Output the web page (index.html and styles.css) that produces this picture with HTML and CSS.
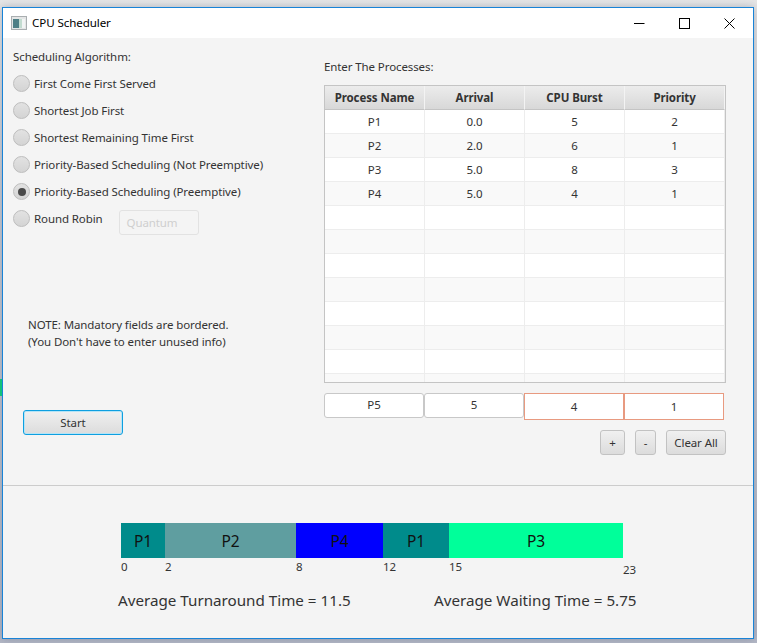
FILE: index.html
```html
<!DOCTYPE html>
<html>
<head>
  <meta charset="utf-8">
  <title>CPU Scheduler</title>
  <link rel="stylesheet" href="styles.css">
</head>
<body>
  <div class="desktop-strip"></div>
  <div class="window">
    <div class="titlebar">
      <svg class="appicon" width="16" height="14" viewBox="0 0 16 14">
        <rect x="0.5" y="0.5" width="15" height="13" fill="#e4e6e6" stroke="#a9aeb0"/>
        <rect x="2" y="3" width="6" height="9" fill="#4e7f86"/>
        <rect x="8" y="3" width="3" height="9" fill="#c3dcd0"/>
        <rect x="11" y="3" width="3" height="9" fill="#f2f4f4"/>
      </svg>
      <span class="title">CPU Scheduler</span>
      <div class="controls">
        <svg width="11" height="11" viewBox="0 0 11 11"><path d="M0 5.5H10.5" stroke="#000" fill="none"/></svg>
        <svg width="11" height="11" viewBox="0 0 11 11"><rect x="0.5" y="0.5" width="10" height="10" stroke="#000" fill="none"/></svg>
        <svg width="11" height="11" viewBox="0 0 11 11"><path d="M0.5 0.5L10.5 10.5M10.5 0.5L0.5 10.5" stroke="#000" fill="none"/></svg>
      </div>
    </div>

    <div class="main">
      <div class="left">
        <div class="heading">Scheduling Algorithm:</div>
        <div class="radio"><span class="dot"></span>First Come First Served</div>
        <div class="radio"><span class="dot"></span>Shortest Job First</div>
        <div class="radio"><span class="dot"></span>Shortest Remaining Time First</div>
        <div class="radio"><span class="dot"></span>Priority-Based Scheduling (Not Preemptive)</div>
        <div class="radio"><span class="dot checked"></span>Priority-Based Scheduling (Preemptive)</div>
        <div class="radio"><span class="dot"></span>Round Robin<div class="quantum">Quantum</div></div>
        <p class="note">NOTE: Mandatory fields are bordered.<br>(You Don't have to enter unused info)</p>
        <button class="btn start">Start</button>
      </div>

      <div class="right">
        <div class="heading">Enter The Processes:</div>
        <div class="tablebox">
          <table>
            <tr><th>Process Name</th><th>Arrival</th><th>CPU Burst</th><th>Priority</th></tr>
            <tr><td>P1</td><td>0.0</td><td>5</td><td>2</td></tr>
            <tr><td>P2</td><td>2.0</td><td>6</td><td>1</td></tr>
            <tr><td>P3</td><td>5.0</td><td>8</td><td>3</td></tr>
            <tr><td>P4</td><td>5.0</td><td>4</td><td>1</td></tr>
            <tr><td></td><td></td><td></td><td></td></tr>
            <tr><td></td><td></td><td></td><td></td></tr>
            <tr><td></td><td></td><td></td><td></td></tr>
            <tr><td></td><td></td><td></td><td></td></tr>
            <tr><td></td><td></td><td></td><td></td></tr>
            <tr><td></td><td></td><td></td><td></td></tr>
            <tr><td></td><td></td><td></td><td></td></tr>
            <tr><td></td><td></td><td></td><td></td></tr>
          </table>
        </div>
        <div class="fields">
          <div class="field">P5</div>
          <div class="field">5</div>
          <div class="field required">4</div>
          <div class="field required">1</div>
        </div>
        <div class="actions">
          <button class="btn small plus">+</button>
          <button class="btn small minus">-</button>
          <button class="btn small clear">Clear All</button>
        </div>
      </div>
    </div>

    <div class="results">
      <div class="gantt">
        <div class="bar teal" style="width:44px">P1</div>
        <div class="bar cadet" style="width:131px">P2</div>
        <div class="bar blue" style="width:87px">P4</div>
        <div class="bar teal" style="width:66px">P1</div>
        <div class="bar green" style="width:174px">P3</div>
      </div>
      <div class="ticks">
        <span style="width:44px">0</span>
        <span style="width:131px">2</span>
        <span style="width:87px">8</span>
        <span style="width:66px">12</span>
        <span style="width:174px">15</span>
        <span class="last">23</span>
      </div>
      <div class="averages">
        <span class="avg first">Average Turnaround Time = 11.5</span>
        <span class="avg">Average Waiting Time = 5.75</span>
      </div>
    </div>
  </div>
</body>
</html>
```

FILE: styles.css
```css
html, body {height: 100%;}
body {margin: 0; overflow: hidden; background: linear-gradient(#e6e6e6, #c9cbd2 30%, #b4b8c6); font-family: "Noto Sans", sans-serif; font-size: 11.5px; letter-spacing: -0.1px; color: #333;}

.desktop-strip {position: absolute; left: 0; top: 379px; width: 2px; height: 17px; background: #12c27a;}

.window {box-sizing: border-box; width: 752px; height: 632px; margin: 7px 0 0 2px; border: 1px solid #1883d7; background: #f4f4f4; box-shadow: 0 0 8px rgba(70, 80, 110, .35);}

.titlebar {display: flex; align-items: center; height: 30px; background: #fff; padding-left: 8px; color: #000;}
.title {margin: -1px 0 0 5px; font-size: 11.6px;}
.appicon {flex: none;}
.controls {display: flex; gap: 34px; margin-left: auto; margin-right: 18px;}

.main {display: flex; height: 447px; border-bottom: 1px solid #ccc;}
.left {width: 321px; padding: 10px 0 0 10px; box-sizing: border-box;}
.right {width: 402px; padding-top: 20px;}
.heading {line-height: 18px;}

.radio {display: flex; align-items: center; height: 27px; position: relative;}
.left .heading {margin-bottom: 4px;}
.dot {box-sizing: border-box; width: 17px; height: 17px; margin-right: 4px; border: 1px solid #bdbdbd; border-radius: 50%; background: linear-gradient(#e2e2e2, #d4d4d4); display: flex; align-items: center; justify-content: center;}
.dot.checked::after {content: ""; width: 8px; height: 8px; border-radius: 50%; background: #4a4a4a;}
.quantum {box-sizing: border-box; width: 80px; height: 25px; margin: 5px 0 0 16px; align-self: flex-start; padding-left: 7px; line-height: 23px; border: 1px solid #e2e2e2; border-radius: 3px; color: #cfcfcf;}

.note {margin: 84px 0 0 15px; line-height: 17px;}

.btn {box-sizing: border-box; height: 25px; padding: 0; border: 1px solid #c2c2c2; border-radius: 3px; background: linear-gradient(#f0f0f0, #dcdcdc); font-family: inherit; font-size: 11.5px; letter-spacing: -0.1px; color: #333;}
.start {display: block; width: 100px; margin: 60px 0 0 10px; border: 1px solid #0e9fe0; box-shadow: inset 0 0 0 1px #b5e4f6;}

.tablebox {box-sizing: border-box; height: 298px; margin-top: 9px; border: 1px solid #c4c4c4; overflow: hidden; background: #f9f9f9;}
table {width: 400px; table-layout: fixed; border-collapse: separate; border-spacing: 0;}
th {box-sizing: border-box; height: 24px; padding: 0; font-weight: bold; background: linear-gradient(#ececec, #d8d8d8); border-right: 1px solid #f3f3f3; border-bottom: 1px solid #c4c4c4;}
td {box-sizing: border-box; height: 24px; padding: 0; text-align: center; border-right: 1px solid #ededed; border-bottom: 1px solid #ededed;}
tr:nth-child(even) td {background: #fff;}
tr:nth-child(odd) td {background: #f9f9f9;}

.fields {display: flex; align-items: flex-start; height: 27px; margin-top: 10px;}
.field {box-sizing: border-box; width: 100px; height: 25px; border: 1px solid #c8c8c8; border-radius: 3px; background: #fff; text-align: center; line-height: 22px;}
.field.required {height: 27px; line-height: 25px; border-color: #e89a80; border-radius: 0;}

.actions {display: flex; justify-content: flex-end; gap: 10px; margin-top: 10px;}
.small.plus {width: 25px;}
.small.minus {width: 21px;}
.small.clear {width: 60px;}

.results {padding: 37px 0 0 118px;}
.gantt {display: flex; height: 35px;}
.bar {display: flex; align-items: center; justify-content: center; font-size: 15.5px; letter-spacing: 0; color: #111;}
.teal {background: #008b8b;}
.cadet {background: #5f9ea0;}
.blue {background: #0000ff;}
.green {background: #00ff9a;}

.ticks {display: flex; height: 18px; line-height: 18px;}
.ticks span {display: block;}
.ticks .last {margin-top: 3px;}

.averages {display: flex; margin: 14px 0 0 -3px; font-size: 15.2px; letter-spacing: 0; line-height: 20px;}
.avg.first {width: 316px;}
```
